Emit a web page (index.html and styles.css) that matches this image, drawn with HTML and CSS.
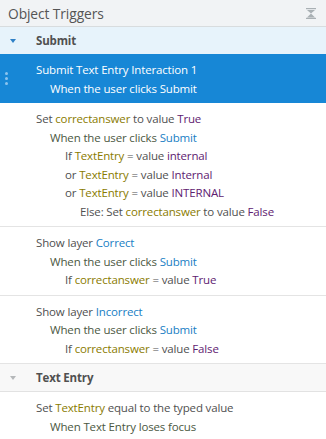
FILE: index.html
```html
<!DOCTYPE html>
<html lang="en">
<head>
<meta charset="UTF-8">
<title>Object Triggers</title>
<link rel="stylesheet" href="styles.css">
</head>
<body>

<div class="panel">
  <header class="panel-head">
    <h1>Object Triggers</h1>
    <svg class="collapse" width="10" height="11" viewBox="0 0 10 11">
      <rect x="0" y="0" width="10" height="1.2" fill="#a9b0b4"/>
      <polygon points="1,2 9,2 5,5.5" fill="#a9b0b4"/>
      <polygon points="5,5.5 9,9.5 1,9.5" fill="#a9b0b4"/>
      <rect x="0" y="9.8" width="10" height="1.2" fill="#a9b0b4"/>
    </svg>
  </header>

  <div class="group open">
    <span class="caret"></span>
    <span class="group-name">Submit</span>
  </div>

  <div class="trigger selected">
    <span class="grip"><i></i><i></i><i></i></span>
    <p>Submit Text Entry Interaction 1</p>
    <p class="l2">When the user clicks Submit</p>
  </div>

  <div class="trigger">
    <p>Set <span class="var">correctanswer</span> to value <span class="val">True</span></p>
    <p class="l2"><span class="evt">When the user clicks</span> <span class="obj">Submit</span></p>
    <p class="l3">If <span class="var">TextEntry</span> = value <span class="val">internal</span></p>
    <p class="l3">or <span class="var">TextEntry</span> = value <span class="val">Internal</span></p>
    <p class="l3">or <span class="var">TextEntry</span> = value <span class="val">INTERNAL</span></p>
    <p class="l4">Else: Set <span class="var">correctanswer</span> to value <span class="val">False</span></p>
  </div>

  <div class="trigger">
    <p>Show layer <span class="obj">Correct</span></p>
    <p class="l2"><span class="evt">When the user clicks</span> <span class="obj">Submit</span></p>
    <p class="l3">If <span class="var">correctanswer</span> = value <span class="val">True</span></p>
  </div>

  <div class="trigger">
    <p>Show layer <span class="obj">Incorrect</span></p>
    <p class="l2"><span class="evt">When the user clicks</span> <span class="obj">Submit</span></p>
    <p class="l3">If <span class="var">correctanswer</span> = value <span class="val">False</span></p>
  </div>

  <div class="group">
    <span class="caret"></span>
    <span class="group-name">Text Entry</span>
  </div>

  <div class="trigger">
    <p>Set <span class="var">TextEntry</span> equal to the typed value</p>
    <p class="l2"><span class="evt">When Text Entry loses focus</span></p>
  </div>
</div>

</body>
</html>
```

FILE: styles.css
```css
body { margin: 0; background: #ffffff; font-family: "Open Sans", "Noto Sans", sans-serif; color: #505050; }
.panel { width: 326px; }

.panel-head { display: flex; align-items: center; justify-content: space-between; height: 26px; padding: 0 10px 0 8px; background: #f1f3f5; border-bottom: 1px solid #d8dcde; }
.panel-head h1 { margin: 0; font-size: 13.8px; font-weight: 400; color: #555; letter-spacing: -0.1px; }
.collapse { display: block; }

.group { display: flex; align-items: center; height: 27px; background: #f8f8f8; border-bottom: 1px solid #e2e2e2; }
.group.open { background: #e7f3fb; border-bottom: none; }
.caret { width: 0; height: 0; margin: 0 20px 0 10px; border-left: 3.5px solid transparent; border-right: 3.5px solid transparent; border-top: 4px solid #b5b8ba; }
.group.open .caret { border-top-color: #2f80c6; }
.group-name { font-size: 11.5px; font-weight: 700; color: #505050; letter-spacing: -0.15px; }

.trigger { position: relative; padding: 7px 8px 5px 36px; border-bottom: 1px solid #e4e4e4; font-size: 11.5px; letter-spacing: -0.15px; }
.trigger p { margin: 0; line-height: 18.5px; white-space: nowrap; }
.trigger .l2 { padding-left: 14px; }
.trigger .l3 { padding-left: 29px; }
.trigger .l4 { padding-left: 44px; }
.trigger:last-child { border-bottom: none; }

.selected { background: #1787d6; color: #ffffff; border-bottom: none; }
.grip { position: absolute; left: 5px; top: 18px; display: flex; flex-direction: column; gap: 2px; }
.grip i { display: block; width: 3px; height: 3px; border-radius: 50%; background: #8cc4ee; }

.var { color: #8a7b00; }
.val { color: #5e2170; }
.obj { color: #2080c4; }
.evt { color: #4b5842; }
```
